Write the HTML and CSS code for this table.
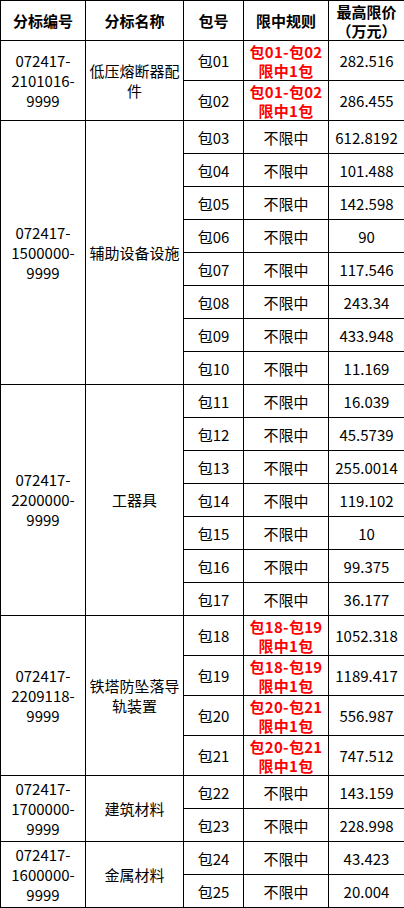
FILE: index.html
```html
<!DOCTYPE html>
<html lang="zh">
<head>
<meta charset="utf-8">
<link rel="stylesheet" href="styles.css">
</head>
<body>
<table class="grid">
<colgroup>
<col class="c1"><col class="c2"><col class="c3"><col class="c4"><col class="c5">
</colgroup>
<thead>
<tr class="h40">
<th>分标编号</th><th>分标名称</th><th>包号</th><th>限中规则</th><th>最高限价<br>（万元）</th>
</tr>
</thead>
<tbody>
<tr class="h40"><td rowspan="2" class="code">072417-<br>2101016-<br>9999</td><td rowspan="2" class="name">低压熔断器配<br>件</td><td>包01</td><td class="rule">包01-包02<br>限中1包</td><td>282.516</td></tr>
<tr class="h40"><td>包02</td><td class="rule">包01-包02<br>限中1包</td><td>286.455</td></tr>

<tr class="h33"><td rowspan="8" class="code">072417-<br>1500000-<br>9999</td><td rowspan="8" class="name">辅助设备设施</td><td>包03</td><td>不限中</td><td>612.8192</td></tr>
<tr class="h33"><td>包04</td><td>不限中</td><td>101.488</td></tr>
<tr class="h33"><td>包05</td><td>不限中</td><td>142.598</td></tr>
<tr class="h33"><td>包06</td><td>不限中</td><td>90</td></tr>
<tr class="h33"><td>包07</td><td>不限中</td><td>117.546</td></tr>
<tr class="h33"><td>包08</td><td>不限中</td><td>243.34</td></tr>
<tr class="h33"><td>包09</td><td>不限中</td><td>433.948</td></tr>
<tr class="h33"><td>包10</td><td>不限中</td><td>11.169</td></tr>

<tr class="h33"><td rowspan="7" class="code">072417-<br>2200000-<br>9999</td><td rowspan="7" class="name">工器具</td><td>包11</td><td>不限中</td><td>16.039</td></tr>
<tr class="h33"><td>包12</td><td>不限中</td><td>45.5739</td></tr>
<tr class="h33"><td>包13</td><td>不限中</td><td>255.0014</td></tr>
<tr class="h33"><td>包14</td><td>不限中</td><td>119.102</td></tr>
<tr class="h33"><td>包15</td><td>不限中</td><td>10</td></tr>
<tr class="h33"><td>包16</td><td>不限中</td><td>99.375</td></tr>
<tr class="h33"><td>包17</td><td>不限中</td><td>36.177</td></tr>

<tr class="h40"><td rowspan="4" class="code">072417-<br>2209118-<br>9999</td><td rowspan="4" class="name">铁塔防坠落导<br>轨装置</td><td>包18</td><td class="rule">包18-包19<br>限中1包</td><td>1052.318</td></tr>
<tr class="h40"><td>包19</td><td class="rule">包18-包19<br>限中1包</td><td>1189.417</td></tr>
<tr class="h40"><td>包20</td><td class="rule">包20-包21<br>限中1包</td><td>556.987</td></tr>
<tr class="h40"><td>包21</td><td class="rule">包20-包21<br>限中1包</td><td>747.512</td></tr>

<tr class="h33"><td rowspan="2" class="code">072417-<br>1700000-<br>9999</td><td rowspan="2" class="name">建筑材料</td><td>包22</td><td>不限中</td><td>143.159</td></tr>
<tr class="h33"><td>包23</td><td>不限中</td><td>228.998</td></tr>

<tr class="h33"><td rowspan="2" class="code">072417-<br>1600000-<br>9999</td><td rowspan="2" class="name">金属材料</td><td>包24</td><td>不限中</td><td>43.423</td></tr>
<tr class="h33"><td>包25</td><td>不限中</td><td>20.004</td></tr>
</tbody>
</table>
</body>
</html>
```

FILE: styles.css
```css
html, body {
  margin: 0;
  padding: 0;
  background: #ffffff;
}
body {
  font-family: "Noto Sans CJK SC", "Noto Sans", sans-serif;
  font-size: 15px;
  color: #000000;
}
.grid {
  border-collapse: collapse;
  table-layout: fixed;
  width: 404px;
}
.c1 { width: 85px; }
.c2 { width: 98px; }
.c3 { width: 60px; }
.c4 { width: 85px; }
.c5 { width: 76px; }
.grid th,
.grid td {
  border: 1px solid #000000;
  padding: 0;
  text-align: center;
  vertical-align: middle;
  line-height: 19px;
  font-weight: normal;
  white-space: nowrap;
  overflow: hidden;
}
.grid th {
  font-weight: bold;
  line-height: 19px;
}
.h40 { height: 40px; }
.h33 { height: 33px; }
.grid td.rule {
  color: #ff0000;
  font-weight: bold;
  line-height: 19px;
  letter-spacing: 0.3px;
}
.grid td.code {
  line-height: 20px;
}
.grid td.name {
  line-height: 20px;
}
```
